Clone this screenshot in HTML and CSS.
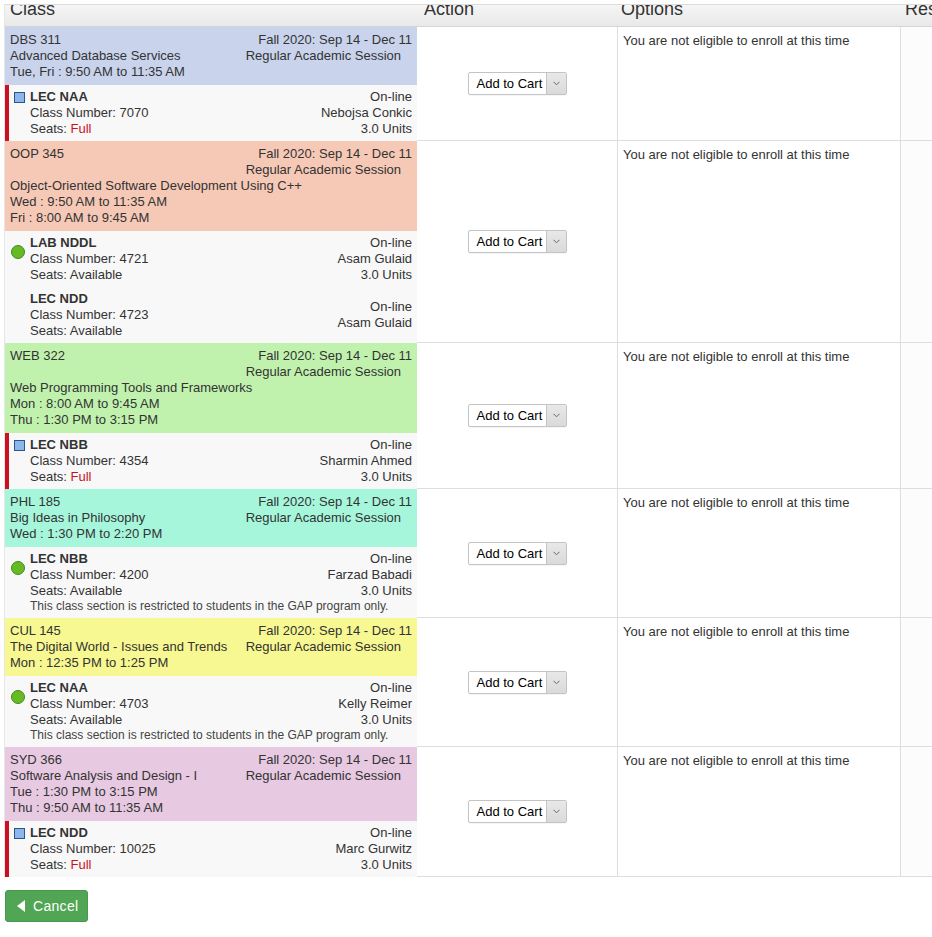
FILE: index.html
```html
<!DOCTYPE html>
<html lang="en">
<head>
<meta charset="utf-8">
<title>Class Search Results</title>
<link rel="stylesheet" href="styles.css">
</head>
<body>
<div class="page">
<table class="enroll">
  <thead>
    <tr>
      <th class="c-class"><div class="thx"><span>Class</span></div></th>
      <th class="c-act"><div class="thx"><span>Action</span></div></th>
      <th class="c-opt"><div class="thx"><span>Options</span></div></th>
      <th class="c-res"><div class="thx"><span>Res</span></div></th>
    </tr>
  </thead>
  <tbody>
    <tr>
      <td class="cls">
        <div class="hd blue">
          <div class="term"><div>Fall 2020: Sep 14 - Dec 11</div><div class="sess">Regular Academic Session</div></div>
          <div class="ln">DBS 311</div>
          <div class="ln">Advanced Database Services</div>
          <div class="ln">Tue, Fri : 9:50 AM to 11:35 AM</div>
        </div>
        <div class="sec full">
          <div class="row">
            <div class="ico"><div class="sq"></div></div>
            <div class="left"><b>LEC NAA</b><div>Class Number: 7070</div><div>Seats: <span class="red">Full</span></div></div>
            <div class="right"><div>On-line</div><div>Nebojsa Conkic</div><div>3.0 Units</div></div>
          </div>
        </div>
      </td>
      <td class="act"><div class="sel"><span class="lbl">Add to Cart</span><span class="arr"><svg width="7" height="5" viewBox="0 0 7 5"><path d="M0.5 0.8 L3.5 3.8 L6.5 0.8" fill="none" stroke="#666" stroke-width="1"/></svg></span></div></td>
      <td class="opt">You are not eligible to enroll at this time</td>
      <td class="res"></td>
    </tr>
    <tr>
      <td class="cls">
        <div class="hd salmon">
          <div class="term"><div>Fall 2020: Sep 14 - Dec 11</div><div class="sess">Regular Academic Session</div></div>
          <div class="ln">OOP 345</div>
          <div class="ln">Object-Oriented Software Development Using C++</div>
          <div class="ln">Wed : 9:50 AM to 11:35 AM</div>
          <div class="ln">Fri : 8:00 AM to 9:45 AM</div>
        </div>
        <div class="sec">
          <div class="row">
            <div class="ico"><div class="dot"></div></div>
            <div class="left"><b>LAB NDDL</b><div>Class Number: 4721</div><div>Seats: Available</div></div>
            <div class="right"><div>On-line</div><div>Asam Gulaid</div><div>3.0 Units</div></div>
          </div>
        </div>
        <div class="sec">
          <div class="row">
            <div class="ico"></div>
            <div class="left"><b>LEC NDD</b><div>Class Number: 4723</div><div>Seats: Available</div></div>
            <div class="right"><div>On-line</div><div>Asam Gulaid</div></div>
          </div>
        </div>
      </td>
      <td class="act"><div class="sel"><span class="lbl">Add to Cart</span><span class="arr"><svg width="7" height="5" viewBox="0 0 7 5"><path d="M0.5 0.8 L3.5 3.8 L6.5 0.8" fill="none" stroke="#666" stroke-width="1"/></svg></span></div></td>
      <td class="opt">You are not eligible to enroll at this time</td>
      <td class="res"></td>
    </tr>
    <tr>
      <td class="cls">
        <div class="hd green">
          <div class="term"><div>Fall 2020: Sep 14 - Dec 11</div><div class="sess">Regular Academic Session</div></div>
          <div class="ln">WEB 322</div>
          <div class="ln">Web Programming Tools and Frameworks</div>
          <div class="ln">Mon : 8:00 AM to 9:45 AM</div>
          <div class="ln">Thu : 1:30 PM to 3:15 PM</div>
        </div>
        <div class="sec full">
          <div class="row">
            <div class="ico"><div class="sq"></div></div>
            <div class="left"><b>LEC NBB</b><div>Class Number: 4354</div><div>Seats: <span class="red">Full</span></div></div>
            <div class="right"><div>On-line</div><div>Sharmin Ahmed</div><div>3.0 Units</div></div>
          </div>
        </div>
      </td>
      <td class="act"><div class="sel"><span class="lbl">Add to Cart</span><span class="arr"><svg width="7" height="5" viewBox="0 0 7 5"><path d="M0.5 0.8 L3.5 3.8 L6.5 0.8" fill="none" stroke="#666" stroke-width="1"/></svg></span></div></td>
      <td class="opt">You are not eligible to enroll at this time</td>
      <td class="res"></td>
    </tr>
    <tr>
      <td class="cls">
        <div class="hd aqua">
          <div class="term"><div>Fall 2020: Sep 14 - Dec 11</div><div class="sess">Regular Academic Session</div></div>
          <div class="ln">PHL 185</div>
          <div class="ln">Big Ideas in Philosophy</div>
          <div class="ln">Wed : 1:30 PM to 2:20 PM</div>
        </div>
        <div class="sec">
          <div class="row">
            <div class="ico"><div class="dot"></div></div>
            <div class="left"><b>LEC NBB</b><div>Class Number: 4200</div><div>Seats: Available</div></div>
            <div class="right"><div>On-line</div><div>Farzad Babadi</div><div>3.0 Units</div></div>
          </div>
          <div class="note">This class section is restricted to students in the GAP program only.</div>
        </div>
      </td>
      <td class="act"><div class="sel"><span class="lbl">Add to Cart</span><span class="arr"><svg width="7" height="5" viewBox="0 0 7 5"><path d="M0.5 0.8 L3.5 3.8 L6.5 0.8" fill="none" stroke="#666" stroke-width="1"/></svg></span></div></td>
      <td class="opt">You are not eligible to enroll at this time</td>
      <td class="res"></td>
    </tr>
    <tr>
      <td class="cls">
        <div class="hd yellow">
          <div class="term"><div>Fall 2020: Sep 14 - Dec 11</div><div class="sess">Regular Academic Session</div></div>
          <div class="ln">CUL 145</div>
          <div class="ln">The Digital World - Issues and Trends</div>
          <div class="ln">Mon : 12:35 PM to 1:25 PM</div>
        </div>
        <div class="sec">
          <div class="row">
            <div class="ico"><div class="dot"></div></div>
            <div class="left"><b>LEC NAA</b><div>Class Number: 4703</div><div>Seats: Available</div></div>
            <div class="right"><div>On-line</div><div>Kelly Reimer</div><div>3.0 Units</div></div>
          </div>
          <div class="note">This class section is restricted to students in the GAP program only.</div>
        </div>
      </td>
      <td class="act"><div class="sel"><span class="lbl">Add to Cart</span><span class="arr"><svg width="7" height="5" viewBox="0 0 7 5"><path d="M0.5 0.8 L3.5 3.8 L6.5 0.8" fill="none" stroke="#666" stroke-width="1"/></svg></span></div></td>
      <td class="opt">You are not eligible to enroll at this time</td>
      <td class="res"></td>
    </tr>
    <tr>
      <td class="cls">
        <div class="hd pink">
          <div class="term"><div>Fall 2020: Sep 14 - Dec 11</div><div class="sess">Regular Academic Session</div></div>
          <div class="ln">SYD 366</div>
          <div class="ln">Software Analysis and Design - I</div>
          <div class="ln">Tue : 1:30 PM to 3:15 PM</div>
          <div class="ln">Thu : 9:50 AM to 11:35 AM</div>
        </div>
        <div class="sec full">
          <div class="row">
            <div class="ico"><div class="sq"></div></div>
            <div class="left"><b>LEC NDD</b><div>Class Number: 10025</div><div>Seats: <span class="red">Full</span></div></div>
            <div class="right"><div>On-line</div><div>Marc Gurwitz</div><div>3.0 Units</div></div>
          </div>
        </div>
      </td>
      <td class="act"><div class="sel"><span class="lbl">Add to Cart</span><span class="arr"><svg width="7" height="5" viewBox="0 0 7 5"><path d="M0.5 0.8 L3.5 3.8 L6.5 0.8" fill="none" stroke="#666" stroke-width="1"/></svg></span></div></td>
      <td class="opt">You are not eligible to enroll at this time</td>
      <td class="res"></td>
    </tr>
  </tbody>
</table>
<div class="actions">
  <button class="btn" type="button"><span class="tri"></span>Cancel</button>
</div>
</div>
</body>
</html>
```
FILE: styles.css
```css
html, body {
  margin: 0;
  padding: 0;
  background: #fff;
}
body {
  font-family: "Liberation Sans", Arial, sans-serif;
  font-size: 13px;
  color: #333;
}
.page {
  width: 932px;
  overflow: hidden;
  padding-top: 4px;
}
.enroll {
  border-collapse: separate;
  border-spacing: 0;
  table-layout: fixed;
  width: 1000px;
  margin-left: 4px;
}
.enroll th,
.enroll td {
  box-sizing: border-box;
  padding: 0;
}
.enroll th {
  background: linear-gradient(#f5f5f5, #e9e9e9);
  border-top: 1px solid #dcdcdc;
  border-bottom: 1px solid #d6d6d6;
  text-align: left;
  font-weight: normal;
  font-size: 18px;
  color: #333;
  vertical-align: top;
}
.thx {
  height: 21px;
  overflow: hidden;
}
.thx span {
  display: block;
  margin-top: -8px;
  line-height: 24px;
}
.c-class { width: 413px; border-left: 1px solid #e6e6e6; padding-left: 5px !important; }
.c-act { width: 200px; padding-left: 7px !important; }
.c-opt { width: 283px; padding-left: 4px !important; }
.c-res { width: 104px; padding-left: 5px !important; }

td.cls {
  vertical-align: top;
  border-left: 1px solid #e6e6e6;
}
td.act {
  vertical-align: middle;
  text-align: center;
  border-bottom: 1px solid #dedede;
  background: #fff;
}
td.opt {
  vertical-align: top;
  padding: 6px 6px 5px 5px;
  line-height: 16px;
  border-left: 1px solid #dedede;
  border-bottom: 1px solid #dedede;
  background: #fff;
}
td.res {
  border-left: 1px solid #dedede;
  border-bottom: 1px solid #dedede;
  background: #fcfcfc;
}

.hd {
  padding: 5px;
  line-height: 16px;
}
.hd::after {
  content: "";
  display: block;
  clear: both;
}
.hd .ln {
  display: table;
  white-space: nowrap;
}
.term {
  float: right;
  text-align: right;
  white-space: nowrap;
}
.sess { padding-right: 11px; }
.blue { background: #c9d3ec; }
.salmon { background: #f6c9b7; }
.green { background: #c0f2ae; }
.aqua { background: #a6f6dc; }
.yellow { background: #f7f891; }
.pink { background: #e7c9e1; }

.sec {
  background: #f8f8f8;
  border-left: 4px solid transparent;
  padding: 4px 5px 4px 0;
  line-height: 16px;
}
.sec.full { border-left-color: #cc1020; }
.row {
  display: flex;
  align-items: center;
}
.ico {
  width: 21px;
  flex: none;
  align-self: flex-start;
}
.left { flex: 1; }
.left b { color: #333; }
.right { text-align: right; }
.red { color: #c8101e; }
.sq {
  width: 9px;
  height: 9px;
  margin: 3px 0 0 5px;
  background: #8db6ea;
  border: 1px solid #2f5488;
}
.dot {
  width: 12px;
  height: 12px;
  margin: 10px 0 0 2px;
  border-radius: 50%;
  background: #66bb25;
  border: 1px solid #3f8c1c;
}
.note {
  padding-left: 21px;
  font-size: 12px;
  line-height: 15px;
  color: #444;
}

.sel {
  display: inline-flex;
  width: 99px;
  height: 23px;
  box-sizing: border-box;
  border: 1px solid #c4c4c4;
  border-radius: 2px;
  background: #fff;
  color: #000;
  font-size: 13px;
  box-shadow: 0 1px 1px rgba(0,0,0,0.04);
}
.sel .lbl {
  flex: 1;
  text-align: left;
  padding-left: 8px;
  line-height: 21px;
}
.sel .arr {
  width: 19px;
  flex: none;
  display: flex;
  align-items: center;
  justify-content: center;
  border-left: 1px solid #c4c4c4;
  background: linear-gradient(#e8e8e8, #dadada);
}

.actions {
  padding: 13px 0 20px 5px;
}
.btn {
  display: inline-flex;
  align-items: center;
  box-sizing: border-box;
  width: 83px;
  height: 32px;
  padding: 0 0 0 11px;
  background: #50a654;
  border: 1px solid #48994c;
  border-radius: 3px;
  color: #fff;
  font-family: "Liberation Sans", Arial, sans-serif;
  font-size: 14px;
  letter-spacing: 0.3px;
  cursor: pointer;
}
.tri {
  width: 0;
  height: 0;
  border-top: 6px solid transparent;
  border-bottom: 6px solid transparent;
  border-right: 8px solid #fff;
  margin-right: 8px;
}
```
